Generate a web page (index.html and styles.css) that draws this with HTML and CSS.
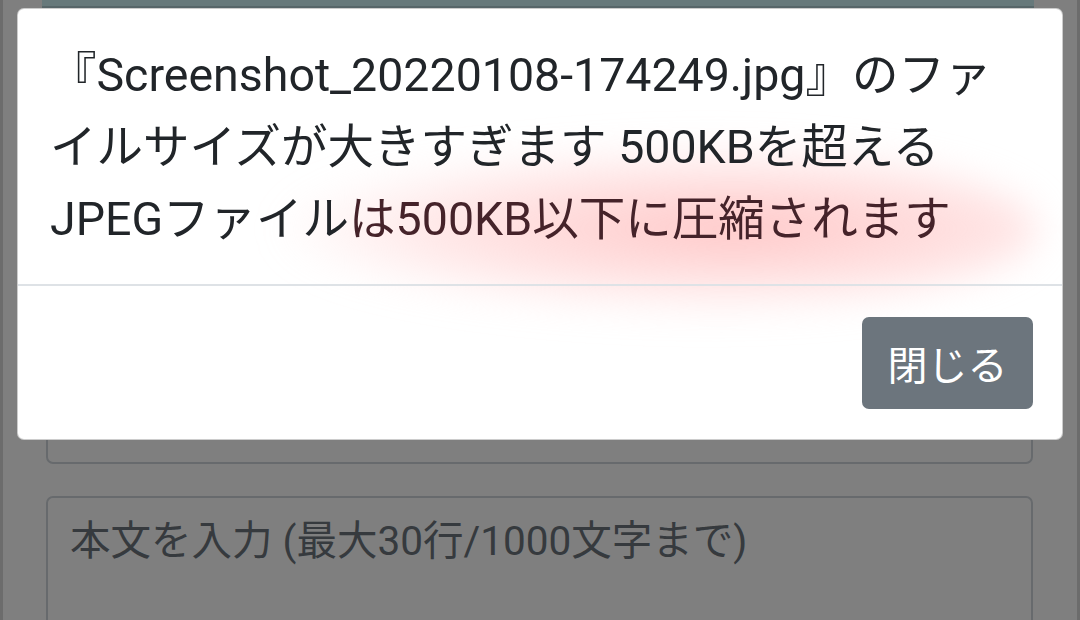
FILE: index.html
```html
<!DOCTYPE html>
<html lang="ja">
<head>
  <meta charset="UTF-8">
  <meta name="viewport" content="width=device-width, initial-scale=1.0">
  <title>投稿フォーム</title>
  <link rel="stylesheet" href="styles.css">
</head>
<body>
  <div class="page">
    <div class="title-bar"></div>
    <div class="form">
      <input class="form-control input-subject" type="text">
      <textarea class="form-control input-body" placeholder="本文を入力 (最大30行/1000文字まで)"></textarea>
    </div>
  </div>

  <div class="backdrop"></div>

  <div class="modal">
    <div class="modal-body">
      <div class="glow"></div>
      <p class="message">『Screenshot_20220108-174249.jpg』のファイルサイズが大きすぎます 500KBを超えるJPEGファイル<span class="hot">は500KB以下に圧縮されます</span></p>
    </div>
    <div class="modal-footer">
      <button class="btn-secondary" type="button">閉じる</button>
    </div>
  </div>
</body>
</html>
```

FILE: styles.css
```css
* {
  box-sizing: border-box;
}

html, body {
  margin: 0;
  height: 100%;
  overflow: hidden;
}

body {
  font-family: Roboto, "Noto Sans CJK JP", sans-serif;
  color: #212529;
  background-color: #fff;
}

.page {
  height: 100%;
  border-left: 3px solid #d8d8d8;
  border-right: 3px solid #d8d8d8;
  background-color: #fff;
}

.title-bar {
  height: 8px;
  margin: 0 43px 0 39px;
  background-color: #cff2f6;
  border-bottom: 2px solid #aecdd2;
}

.form {
  display: flex;
  flex-direction: column;
  gap: 32px;
  padding: 356px 44px 0 43px;
}

.form-control {
  display: block;
  width: 100%;
  border: 2px solid #ced4da;
  border-radius: 7px;
  background-color: #fff;
  font-family: inherit;
  outline: none;
}

.input-subject {
  height: 100px;
}

.input-body {
  height: 220px;
  padding: 12px 22px;
  font-size: 40.5px;
  line-height: 62px;
  resize: none;
}

.input-body::placeholder {
  color: #6c757d;
  opacity: 1;
}

.backdrop {
  position: fixed;
  inset: 0;
  background-color: rgba(0, 0, 0, 0.5);
}

.modal {
  position: fixed;
  top: 8px;
  left: 17px;
  width: 1046px;
  background-color: #fff;
  border: 1px solid rgba(0, 0, 0, 0.2);
  border-radius: 7px;
  overflow: hidden;
}

.modal-body {
  position: relative;
  padding: 30px 45px 29px 32px;
}

.glow {
  position: absolute;
  left: 260px;
  top: 135px;
  width: 760px;
  height: 170px;
  border-radius: 50%;
  background: radial-gradient(ellipse at 60% 50%, rgba(255, 185, 185, 0.8) 0%, rgba(255, 205, 205, 0.5) 45%, rgba(255, 225, 225, 0) 72%);
  filter: blur(18px);
}

.message {
  position: relative;
  margin: 0;
  font-size: 46.5px;
  line-height: 72px;
}

.hot {
  color: #45232a;
}

.modal-footer {
  position: relative;
  display: flex;
  justify-content: flex-end;
  padding: 31px 29px 30px;
  border-top: 2px solid #dee2e6;
}

.btn-secondary {
  width: 171px;
  height: 92px;
  padding: 0;
  font-family: inherit;
  font-size: 40px;
  color: #fff;
  background-color: #6c757d;
  border: none;
  border-radius: 7px;
  cursor: pointer;
}
```
